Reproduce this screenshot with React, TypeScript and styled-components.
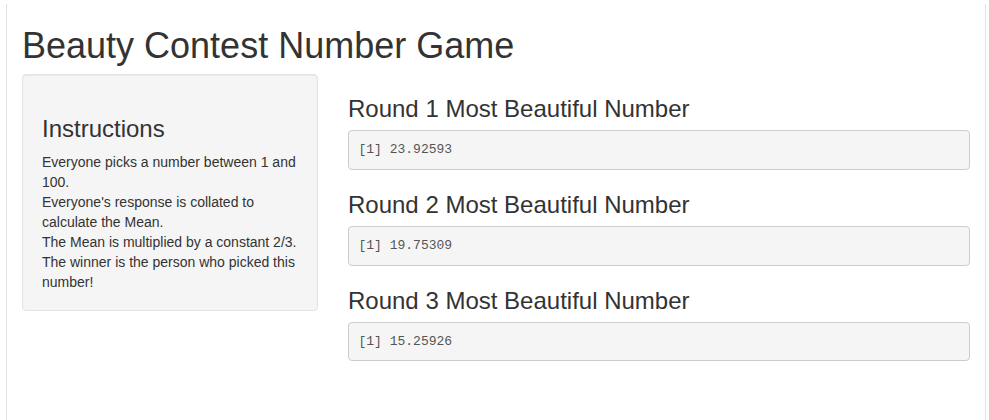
import React from "react";
import styled, { createGlobalStyle } from "styled-components";

const Global = createGlobalStyle`
  html, body { margin: 0; padding: 0; background: #fff; }
  body {
    font-family: "Liberation Sans", Arial, Helvetica, sans-serif;
    font-size: 14px;
    line-height: 1.42857143;
    color: #333;
  }
  * { box-sizing: border-box; }
`;

const Frame = styled.div`
  margin: 4px 0 0 6px;
  width: 980px;
  min-height: 416px;
  border-left: 1px solid #e3e3e3;
  border-right: 1px solid #e3e3e3;
  padding: 0 15px;
  display: flow-root;
`;

const Title = styled.h1`
  font-size: 36px;
  font-weight: 500;
  line-height: 1.1;
  margin: 20px 0 8px;
  padding-top: 2px;
`;

const Row = styled.div`
  display: flex;
  margin: 0 -15px;
`;

const SideCol = styled.div`
  width: 33.3333%;
  padding: 0 15px;
`;

const MainCol = styled.div`
  width: 66.6667%;
  padding: 0 15px;
`;

const Well = styled.div`
  background: #f5f5f5;
  border: 1px solid #e3e3e3;
  border-radius: 4px;
  box-shadow: inset 0 1px 1px rgba(0, 0, 0, 0.05);
  padding: 19px 19px 18px;
  margin-bottom: 20px;
`;

const Heading = styled.h3`
  font-size: 24px;
  font-weight: 500;
  line-height: 1.1;
  margin: 20px 0 8px;
  padding-top: 2px;
`;

const Text = styled.p`
  margin: 0;
  padding-top: 2px;
`;

const Output = styled.pre`
  display: block;
  margin: 0 0 10px;
  padding: 10.5px 9.5px 8.5px;
  font-family: "Liberation Mono", "Courier New", monospace;
  font-size: 13px;
  line-height: 1.42857143;
  color: #555;
  background: #f5f5f5;
  border: 1px solid #ccc;
  border-radius: 4px;
  white-space: pre-wrap;
`;

const rounds = [
  { n: 1, v: "23.92593" },
  { n: 2, v: "19.75309" },
  { n: 3, v: "15.25926" },
];

export default function App() {
  return (
    <>
      <Global />
      <Frame>
        <Title>Beauty Contest Number Game</Title>
        <Row>
          <SideCol>
            <Well>
              <Heading>Instructions</Heading>
              <Text>
                Everyone picks a number between 1 and 100.
                <br />
                Everyone's response is collated to calculate the Mean.
                <br />
                The Mean is multiplied by a constant 2/3.
                <br />
                The winner is the person who picked this number!
              </Text>
            </Well>
          </SideCol>
          <MainCol>
            {rounds.map((r) => (
              <React.Fragment key={r.n}>
                <Heading>Round {r.n} Most Beautiful Number</Heading>
                <Output>[1] {r.v}</Output>
              </React.Fragment>
            ))}
          </MainCol>
        </Row>
      </Frame>
    </>
  );
}
